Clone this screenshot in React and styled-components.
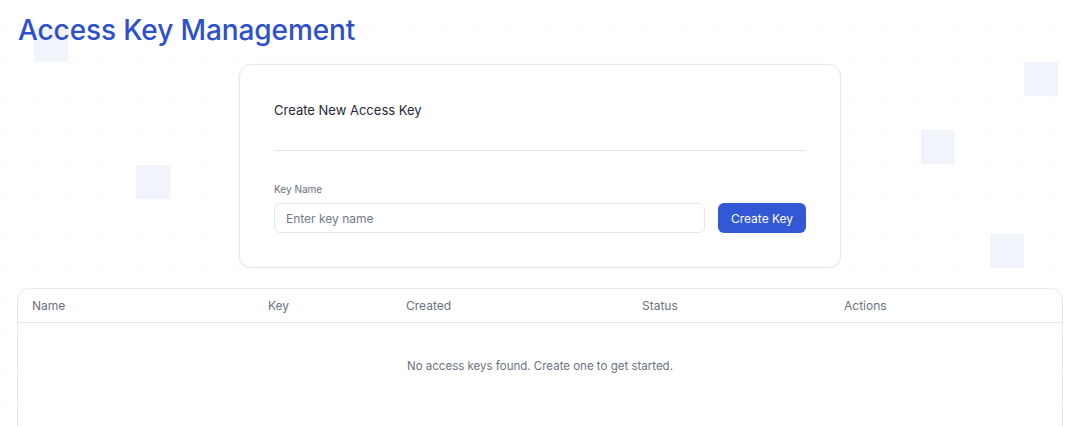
import React, { useState } from "react";
import styled, { createGlobalStyle } from "styled-components";

const GlobalStyle = createGlobalStyle`
  * { box-sizing: border-box; }
  body {
    margin: 0;
    background: #fff;
    font-family: Inter, "Noto Sans", sans-serif;
    color: #111827;
  }
`;

const squares = [
  { x: 34, y: 28 },
  { x: 136, y: 165 },
  { x: 921, y: 130 },
  { x: 1024, y: 62 },
  { x: 990, y: 234 },
];

function App() {
  const [name, setName] = useState("");
  return (
    <>
      <GlobalStyle />
      <Page>
        {squares.map((s, i) => (
          <Square key={i} style={{ left: s.x, top: s.y }} />
        ))}
        <Content>
          <Title>Access Key Management</Title>
          <Card>
            <CardTitle>Create New Access Key</CardTitle>
            <Divider />
            <Label>Key Name</Label>
            <FormRow>
              <Input
                value={name}
                placeholder="Enter key name"
                onChange={(e) => setName(e.target.value)}
              />
              <Button>Create Key</Button>
            </FormRow>
          </Card>
          <Table>
            <HeadRow>
              <HeadCell>Name</HeadCell>
              <HeadCell>Key</HeadCell>
              <HeadCell>Created</HeadCell>
              <HeadCell>Status</HeadCell>
              <HeadCell>Actions</HeadCell>
            </HeadRow>
            <Empty>No access keys found. Create one to get started.</Empty>
          </Table>
        </Content>
      </Page>
    </>
  );
}

export default App;

const Page = styled.div`
  position: relative;
  height: 426px;
  overflow: hidden;
  background-color: #fff;
  background-image: linear-gradient(rgba(17, 24, 39, 0.01) 1px, transparent 1px),
    linear-gradient(90deg, rgba(17, 24, 39, 0.01) 1px, transparent 1px);
  background-size: 34px 34px;
  background-position: 0 -5px;
`;
const Square = styled.div`
  position: absolute;
  width: 34px;
  height: 34px;
  background: #f2f4fc;
`;
const Content = styled.div`
  position: relative;
  padding: 12px 17px 0 17px;
`;
const Title = styled.h1`
  margin: 0 0 16px 1px;
  font-size: 28px;
  line-height: 36px;
  font-weight: 500;
  color: #2f50c9;
  letter-spacing: -0.1px;
`;
const Card = styled.div`
  width: 602px;
  margin: 0 auto 20px;
  background: #fff;
  border: 1px solid #e7e8ec;
  border-radius: 12px;
  box-shadow: 0 1px 3px rgba(0, 0, 0, 0.04);
  padding: 35px 34px 34px 34px;
`;
const CardTitle = styled.div`
  font-size: 13px;
  line-height: 20px;
  color: #1f2937;
  margin-bottom: 30px;
`;
const Divider = styled.div`
  height: 1px;
  background: #e5e7eb;
  margin-bottom: 31px;
`;
const Label = styled.div`
  font-size: 10px;
  line-height: 14px;
  color: #6b7280;
  margin-bottom: 7px;
`;
const FormRow = styled.div`
  display: flex;
  gap: 13px;
`;
const Input = styled.input`
  flex: 1;
  height: 30px;
  border: 1px solid #e5e7eb;
  border-radius: 6px;
  padding: 0 11px;
  font-family: inherit;
  font-size: 12px;
  color: #111827;
  outline: none;
  &::placeholder {
    color: #737985;
  }
`;
const Button = styled.button`
  width: 88px;
  height: 30px;
  border: none;
  border-radius: 6px;
  background: #3358d6;
  color: #fff;
  font-family: inherit;
  font-size: 12px;
  cursor: pointer;
`;
const Table = styled.div`
  background: #fff;
  border: 1px solid #e7e8ec;
  border-radius: 12px;
  height: 200px;
`;
const HeadRow = styled.div`
  display: grid;
  grid-template-columns: 236px 138px 236px 202px 1fr;
  padding: 0 14px;
  height: 34px;
  align-items: center;
  border-bottom: 1px solid #e5e7eb;
`;
const HeadCell = styled.div`
  font-size: 12px;
  color: #6b7280;
`;
const Empty = styled.div`
  text-align: center;
  font-size: 11.5px;
  color: #6b7280;
  padding-top: 36px;
`;
